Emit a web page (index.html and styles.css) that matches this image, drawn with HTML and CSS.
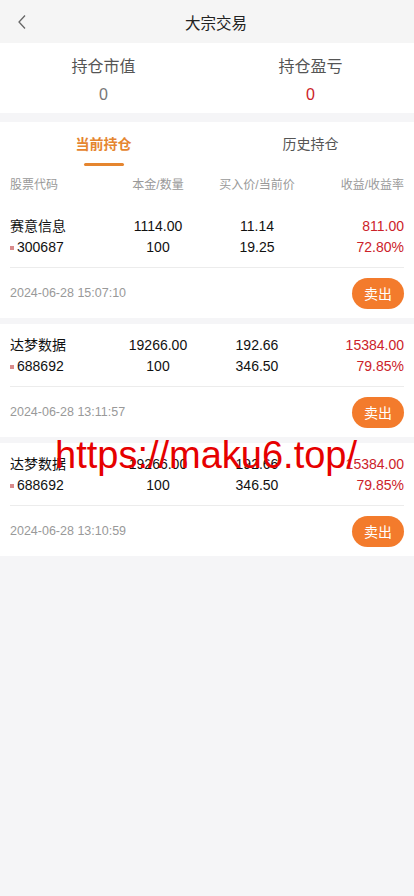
FILE: index.html
```html
<!DOCTYPE html>
<html lang="zh-CN">
<head>
    <meta charset="UTF-8">
    <meta name="viewport" content="width=device-width, initial-scale=1.0">
    <title>大宗交易</title>
    <link rel="stylesheet" href="styles.css">
</head>
<body>
    <div class="topbar">
        <a class="back" href="#">
            <svg width="10" height="16" viewBox="0 0 10 16"><path d="M8 1.5 L2 8 L8 14.5" fill="none" stroke="#666" stroke-width="1.3"/></svg>
        </a>
        <h1>大宗交易</h1>
        <span></span>
    </div>

    <div class="summary">
        <div class="summary-item">
            <p class="label">持仓市值</p>
            <p class="value">0</p>
        </div>
        <div class="summary-item">
            <p class="label">持仓盈亏</p>
            <p class="value red">0</p>
        </div>
    </div>

    <div class="panel">
        <div class="tabs">
            <div class="tab active">当前持仓</div>
            <div class="tab">历史持仓</div>
        </div>
        <div class="cols head">
            <span>股票代码</span>
            <span class="c">本金/数量</span>
            <span class="c">买入价/当前价</span>
            <span class="r">收益/收益率</span>
        </div>
    </div>

    <div class="list">
        <div class="card">
            <div class="cols row">
                <span class="name">赛意信息</span>
                <span class="c">1114.00</span>
                <span class="c">11.14</span>
                <span class="r red">811.00</span>
            </div>
            <div class="cols row">
                <span class="code">300687</span>
                <span class="c">100</span>
                <span class="c">19.25</span>
                <span class="r red">72.80%</span>
            </div>
            <div class="foot">
                <span class="date">2024-06-28 15:07:10</span>
                <button class="sell">卖出</button>
            </div>
        </div>

        <div class="card">
            <div class="cols row">
                <span class="name">达梦数据</span>
                <span class="c">19266.00</span>
                <span class="c">192.66</span>
                <span class="r red">15384.00</span>
            </div>
            <div class="cols row">
                <span class="code">688692</span>
                <span class="c">100</span>
                <span class="c">346.50</span>
                <span class="r red">79.85%</span>
            </div>
            <div class="foot">
                <span class="date">2024-06-28 13:11:57</span>
                <button class="sell">卖出</button>
            </div>
        </div>

        <div class="card">
            <div class="cols row">
                <span class="name">达梦数据</span>
                <span class="c">19266.00</span>
                <span class="c">192.66</span>
                <span class="r red">15384.00</span>
            </div>
            <div class="cols row">
                <span class="code">688692</span>
                <span class="c">100</span>
                <span class="c">346.50</span>
                <span class="r red">79.85%</span>
            </div>
            <div class="foot">
                <span class="date">2024-06-28 13:10:59</span>
                <button class="sell">卖出</button>
            </div>
        </div>
    </div>

    <div class="watermark">https://maku6.top/</div>
</body>
</html>
```

FILE: styles.css
```css
body {
    margin: 0;
    background: #f5f5f7;
    font-family: "Liberation Sans", "Noto Sans CJK SC", sans-serif;
    color: #222;
    position: relative;
    min-height: 896px;
}
p {
    margin: 0;
}
.topbar {
    display: grid;
    grid-template-columns: 62px 1fr 44px;
    align-items: center;
    height: 43px;
    background: #f5f5f5;
}
.back {
    display: flex;
    align-items: center;
    padding-left: 17px;
    height: 43px;
}
.topbar h1 {
    margin: 0;
    text-align: center;
    font-size: 15.5px;
    font-weight: normal;
    color: #222;
}
.summary {
    display: grid;
    grid-template-columns: 1fr 1fr;
    background: #fff;
    height: 70px;
    margin-bottom: 9px;
}
.summary-item {
    text-align: center;
    padding-top: 13px;
}
.summary-item .label {
    font-size: 16px;
    line-height: 22px;
    color: #555;
}
.summary-item .value {
    font-size: 16px;
    line-height: 20px;
    margin-top: 7px;
    color: #777;
}
.red {
    color: #cc2229 !important;
}
.panel {
    background: #fff;
}
.tabs {
    display: grid;
    grid-template-columns: 1fr 1fr;
    height: 44px;
}
.tab {
    text-align: center;
    font-size: 14px;
    line-height: 44px;
    color: #555;
    position: relative;
}
.tab.active {
    color: #e5852f;
    font-weight: bold;
}
.tab.active::after {
    content: "";
    position: absolute;
    left: 50%;
    bottom: 0;
    width: 40px;
    height: 3px;
    margin-left: -20px;
    background: #e5852f;
    border-radius: 2px;
}
.cols {
    display: grid;
    grid-template-columns: 98px 100px 98px 1fr;
    padding: 0 10px;
}
.cols .c {
    text-align: center;
}
.cols .r {
    text-align: right;
}
.head {
    font-size: 12px;
    line-height: 39px;
    color: #999;
}
.card {
    background: #fff;
    margin-bottom: 6px;
    padding-top: 11px;
}
.row {
    font-size: 14px;
    line-height: 21px;
    color: #111;
}
.code::before {
    content: "";
    display: inline-block;
    width: 4px;
    height: 4px;
    background: #d98b8b;
    margin-right: 3px;
    vertical-align: middle;
}
.foot {
    display: flex;
    justify-content: space-between;
    align-items: center;
    margin: 9px 10px 0;
    border-top: 1px solid #ececec;
    height: 50px;
}
.date {
    font-size: 12.5px;
    color: #999;
}
.sell {
    width: 52px;
    height: 31px;
    border: none;
    border-radius: 16px;
    background: #f37b2c;
    color: #fff;
    font-size: 14px;
    font-family: inherit;
    padding: 0;
}
.watermark {
    position: absolute;
    left: 55px;
    top: 433px;
    font-size: 38px;
    line-height: 44px;
    color: #e60000;
    pointer-events: none;
}
```
